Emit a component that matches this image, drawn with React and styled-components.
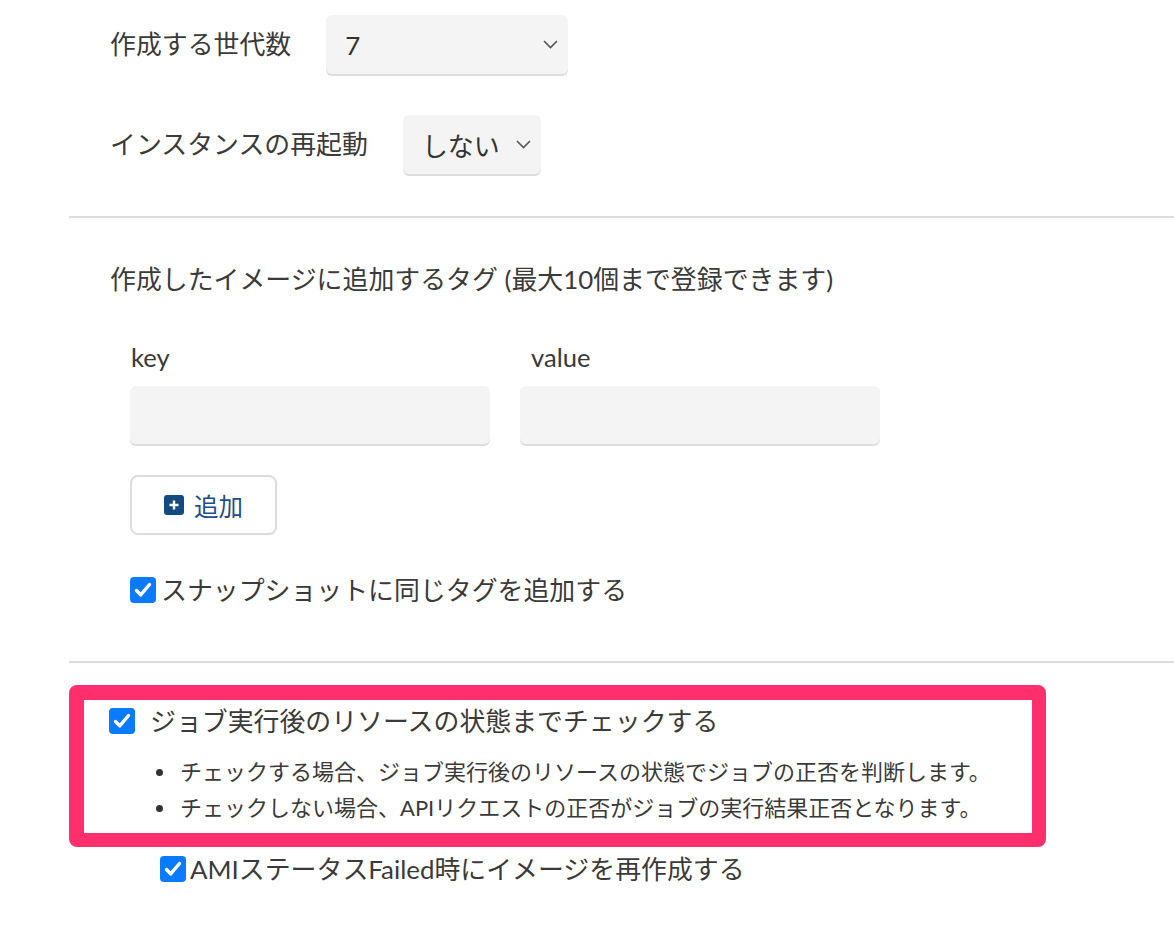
import React from "react";
import styled, { createGlobalStyle } from "styled-components";

const Global = createGlobalStyle`
  html, body { margin: 0; padding: 0; background: #fff; }
  body {
    font-family: Lato, "Noto Sans CJK JP", sans-serif;
    color: #3a3a3a;
  }
`;

const Page = styled.div`
  padding: 15px 0 40px 69px;
  box-sizing: border-box;
  width: 1174px;
`;

const Section = styled.div`
  padding-left: ${(p) => p.$indent || 41}px;
`;

const FormRow = styled.div`
  display: flex;
  align-items: center;
  gap: 35px;
  margin-top: ${(p) => p.$mt || 0}px;
`;

const Label = styled.span`
  font-size: 25.9px;
  line-height: 34px;
  color: #3a3a3a;
  padding-bottom: 2px;
`;

const SelectBox = styled.div`
  display: flex;
  align-items: center;
  justify-content: space-between;
  gap: 16px;
  box-sizing: border-box;
  width: ${(p) => (p.$width ? `${p.$width}px` : "auto")};
  height: 59px;
  padding: 0 10px 0 19px;
  background: #f4f4f4;
  border-radius: 6px;
  box-shadow: 0 2px 0 #dedede;
  font-size: 25.9px;
  color: #333;
`;

const Chevron = () => (
  <svg width="15" height="9" viewBox="0 0 15 9" fill="none">
    <polyline points="1,1 7.5,7.5 14,1" stroke="#555" strokeWidth="1.6" />
  </svg>
);

const Divider = styled.hr`
  border: none;
  height: 2px;
  background: #dddddd;
  margin: ${(p) => p.$mt}px 0 0 0;
`;

const Heading = styled.div`
  font-size: 25.9px;
  line-height: 36px;
  margin-top: ${(p) => p.$mt || 0}px;
`;

const TagGrid = styled.div`
  display: grid;
  grid-template-columns: 360px 360px;
  column-gap: 30px;
  row-gap: 13px;
  margin-top: 44px;
  padding-left: 20px;
`;

const FieldLabel = styled.div`
  font-size: 25.6px;
  line-height: 32px;
  padding-left: ${(p) => p.$indent || 1}px;
`;

const Input = styled.div`
  height: 58px;
  background: #f4f4f4;
  border-radius: 6px;
  box-shadow: 0 2px 0 #dedede;
`;

const AddButton = styled.button`
  display: flex;
  align-items: center;
  justify-content: center;
  gap: 10px;
  box-sizing: border-box;
  width: 147px;
  height: 60px;
  margin: 31px 0 0 20px;
  background: #fff;
  border: 2px solid #dddddd;
  border-radius: 8px;
  font-family: inherit;
  font-size: 24.5px;
  color: #1d4f86;
  cursor: pointer;
  padding: 0;
`;

const PlusIcon = () => (
  <svg width="20" height="20" viewBox="0 0 20 20">
    <rect width="20" height="20" rx="3" fill="#134b80" />
    <path d="M10 5.5v9M5.5 10h9" stroke="#fff" strokeWidth="2.4" />
  </svg>
);

const CheckRow = styled.label`
  display: flex;
  align-items: center;
  gap: ${(p) => p.$gap || 5}px;
  margin: ${(p) => p.$margin || "0"};
  font-size: 25.9px;
  line-height: 36px;
  color: #3a3a3a;
`;

const Box = styled.span`
  flex: none;
  display: inline-flex;
  align-items: center;
  justify-content: center;
  width: 26px;
  height: 26px;
  border-radius: 4px;
  background: #0a7aff;
`;

const Check = () => (
  <Box>
    <svg width="22" height="22" viewBox="0 0 22 22" fill="none">
      <path
        d="M4.5 11.5l4.2 4.4L17.5 5.5"
        stroke="#fff"
        strokeWidth="3.4"
        strokeLinecap="round"
        strokeLinejoin="round"
      />
    </svg>
  </Box>
);

const Highlight = styled.div`
  width: 977px;
  box-sizing: border-box;
  margin-top: 22px;
  border: 14px solid #ff2e6c;
  border-top-width: 15px;
  border-left-width: 15px;
  border-radius: 8px;
  padding: 3px 20px 7px 25px;
  background: #fff;
`;

const Bullets = styled.ul`
  list-style: none;
  margin: 15px 0 0 0;
  padding: 0 0 0 47px;
`;

const Bullet = styled.li`
  position: relative;
  padding-left: 24px;
  font-size: 22px;
  line-height: 36px;
  color: #3a3a3a;
  &::before {
    content: "";
    position: absolute;
    left: 0;
    top: 15px;
    width: 7px;
    height: 7px;
    border-radius: 50%;
    background: #333;
  }
`;

export default function App() {
  return (
    <>
      <Global />
      <Page>
        <Section>
          <FormRow>
            <Label>作成する世代数</Label>
            <SelectBox $width={242}>
              <span>7</span>
              <Chevron />
            </SelectBox>
          </FormRow>
          <FormRow $mt={41}>
            <Label>インスタンスの再起動</Label>
            <SelectBox>
              <span>しない</span>
              <Chevron />
            </SelectBox>
          </FormRow>
        </Section>
        <Divider $mt={42} />
        <Section>
          <Heading $mt={43}>作成したイメージに追加するタグ (最大10個まで登録できます)</Heading>
          <TagGrid>
            <FieldLabel>key</FieldLabel>
            <FieldLabel $indent={11}>value</FieldLabel>
            <Input />
            <Input />
          </TagGrid>
          <AddButton>
            <PlusIcon />
            <span>追加</span>
          </AddButton>
          <CheckRow $margin="37px 0 0 20px">
            <Check />
            <span>スナップショットに同じタグを追加する</span>
          </CheckRow>
        </Section>
        <Divider $mt={53} />
        <Highlight>
          <CheckRow $gap={15}>
            <Check />
            <span>ジョブ実行後のリソースの状態までチェックする</span>
          </CheckRow>
          <Bullets>
            <Bullet>チェックする場合、ジョブ実行後のリソースの状態でジョブの正否を判断します。</Bullet>
            <Bullet>チェックしない場合、APIリクエストの正否がジョブの実行結果正否となります。</Bullet>
          </Bullets>
        </Highlight>
        <CheckRow $margin="4px 0 0 91px" $gap={4}>
          <Check />
          <span>AMIステータスFailed時にイメージを再作成する</span>
        </CheckRow>
      </Page>
    </>
  );
}
